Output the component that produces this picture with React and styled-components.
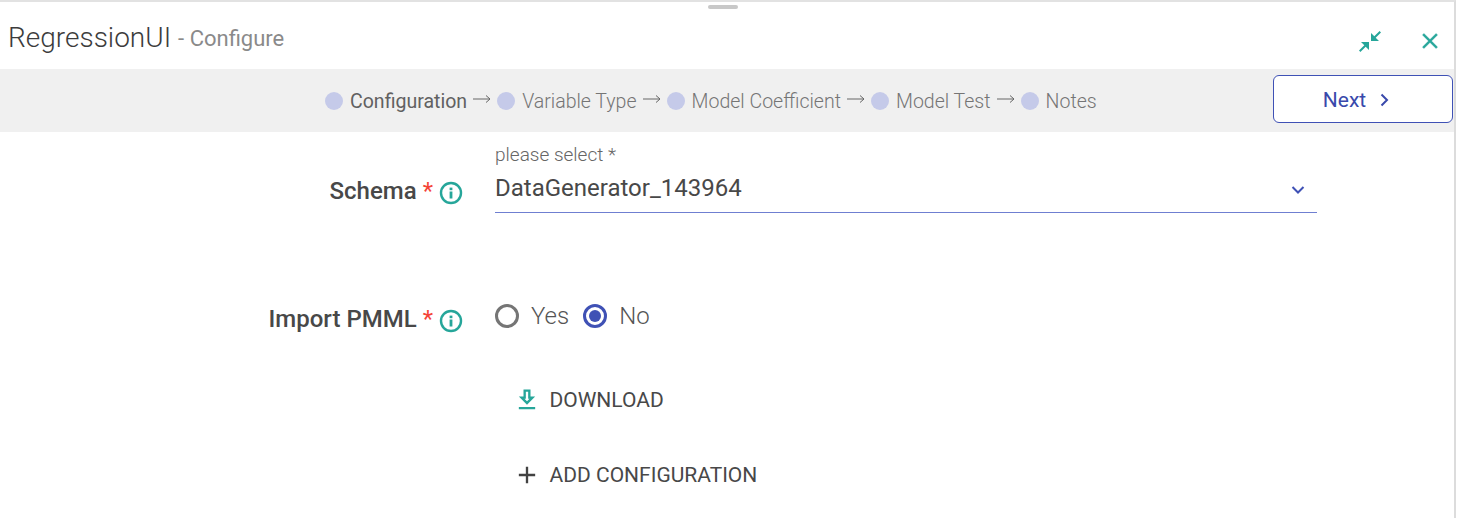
import React from "react";
import styled, { createGlobalStyle } from "styled-components";

const Global = createGlobalStyle`
  html, body { margin: 0; padding: 0; background: #fff; }
  body { font-family: Roboto, "Liberation Sans", sans-serif; overflow: hidden; }
`;
const Panel = styled.div`
  position: relative; width: 1454px; height: 518px; background: #fff;
  border-top: 2px solid #e2e2e2; border-right: 2px solid #dcdcdc;
`;
const Handle = styled.div`
  position: absolute; left: 708px; top: 3px; width: 30px; height: 4px;
  border-radius: 2px; background: #c8c8c8;
`;
const Header = styled.header`
  height: 67px; display: flex; align-items: center; justify-content: space-between;
  padding: 0 11px 0 8px; box-sizing: border-box;
`;
const Title = styled.div`
  display: flex; align-items: baseline; gap: 7px; font-size: 28px; font-weight: 300; color: #3c3c3c;
  margin-top: 3px;
`;
const Sub = styled.span` font-size: 22px; font-weight: 400; color: #8a8a8a; position: relative; top: -1px; `;
const HeaderIcons = styled.div` display: flex; align-items: center; gap: 35px; margin-top: 10px; `;
const Stepper = styled.div`
  position: relative; height: 63px; background: #f0f0f0; display: flex; align-items: center;
  padding-left: 325px; padding-top: 1px; box-sizing: border-box;
`;
const Dot = styled.span`
  width: 18px; height: 18px; border-radius: 50%; background: #c5cae9; flex: none;
`;
const StepLabel = styled.span`
  margin-left: 7px; font-size: 19.55px; color: ${p => p.$active ? "#616161" : "#757575"};
  font-weight: ${p => p.$active ? 400 : 300}; white-space: nowrap;
`;
const Arrow = styled.svg`
  width: 18px; height: 10px; margin: -4px 6px 0 6px; flex: none;
`;
const NextButton = styled.button`
  position: absolute; right: 1px; top: 6px; width: 180px; height: 48px; box-sizing: border-box;
  border: 1px solid #3f51b5; border-radius: 6px; background: #fff; color: #3949ab;
  font: 400 21px Roboto, sans-serif; display: flex; align-items: center; justify-content: center; gap: 11px;
  padding: 2px 12px 0 0;
`;
const Form = styled.main`
  display: flex; flex-direction: column; padding-top: 11px;
`;
const Row = styled.div`
  display: grid; grid-template-columns: 495px 822px; align-items: start;
  height: ${p => p.$h}px;
`;
const LabelCell = styled.div`
  display: flex; justify-content: flex-end; align-items: center; padding-right: 32px;
  font-size: 24px; font-weight: 500; color: #484848; padding-top: ${p => p.$top || 0}px;
`;
const Star = styled.span` color: #f44336; margin-left: 6px; font-weight: 400; `;
const InfoIcon = styled.svg` width: 24px; height: 24px; margin-left: 6px; margin-top: 5px; flex: none; `;
const Field = styled.div`
  position: relative; height: 70px; box-sizing: border-box; border-bottom: 1px solid #6f7fd1;
`;
const FieldLabel = styled.div` font-size: 19px; font-weight: 300; color: #666; line-height: 24px; `;
const FieldValue = styled.div` font-size: 24px; color: #484848; line-height: 28px; margin-top: 7px; `;
const Chevron = styled.svg` position: absolute; right: 11px; top: 39px; width: 16px; height: 16px; `;
const Radios = styled.div` display: flex; align-items: center; gap: 14px; height: 30px; `;
const RadioItem = styled.label` display: flex; align-items: center; gap: 12px; font-size: 24px; font-weight: 300; color: #555; `;
const RadioMark = styled.span`
  width: 24px; height: 24px; box-sizing: border-box; border-radius: 50%; border: 3px solid ${p => p.$on ? "#3f51b5" : "#757575"};
  display: flex; align-items: center; justify-content: center;
  &::after { content: ""; width: 12px; height: 12px; border-radius: 50%; background: ${p => p.$on ? "#3f51b5" : "transparent"}; }
`;
const ActionButton = styled.button`
  display: flex; align-items: center; gap: 8.5px; background: none; border: 0; padding: 0 0 0 18px; height: 30px;
  font: 400 21px Roboto, sans-serif; color: #484848; white-space: nowrap;
`;
const ActionIcon = styled.svg` width: 28px; height: 28px; flex: none; fill: ${p => p.$color}; `;

const Info = () => (
  <InfoIcon viewBox="0 0 24 24" fill="none">
    <circle cx="12" cy="12" r="10" stroke="#26a69a" strokeWidth="2.4" />
    <rect x="10.6" y="10.5" width="2.8" height="7" fill="#26a69a" />
    <rect x="10.6" y="6.6" width="2.8" height="2.6" fill="#26a69a" />
  </InfoIcon>
);
const ArrowGlyph = () => (
  <Arrow viewBox="0 0 18 10" fill="none" stroke="#666" strokeWidth="1">
    <path d="M0 5h17M13 1.5L17 5l-4 3.5" />
  </Arrow>
);
const steps = ["Configuration", "Variable Type", "Model Coefficient", "Model Test", "Notes"];

export default function App() {
  return (
    <>
      <Global />
      <Panel>
        <Handle />
        <Header>
          <Title>RegressionUI <Sub>- Configure</Sub></Title>
          <HeaderIcons>
            <svg width="24" height="24" viewBox="0 0 24 24" fill="#26a69a">
              <path d="M23 3.4l-5.3 5.3L21 12h-8V4l3.3 3.3L21.6 2z" />
              <path d="M2.4 23l5.3-5.3L11 21v-8H3l3.3 3.3L1 21.6z" />
            </svg>
            <svg width="26" height="26" viewBox="0 0 24 24" fill="#26a69a" stroke="#26a69a" strokeWidth="0.3">
              <path d="M19 6.41L17.59 5 12 10.59 6.41 5 5 6.41 10.59 12 5 17.59 6.41 19 12 13.41 17.59 19 19 17.59 13.41 12z" />
            </svg>
          </HeaderIcons>
        </Header>
        <Stepper>
          {steps.map((s, i) => (
            <React.Fragment key={s}>
              <Dot />
              <StepLabel $active={i === 0}>{s}</StepLabel>
              {i < steps.length - 1 && <ArrowGlyph />}
            </React.Fragment>
          ))}
          <NextButton>
            Next
            <svg width="14" height="14" viewBox="0 0 14 14" fill="none" stroke="#3949ab" strokeWidth="2"><path d="M4.5 1.5L10 7l-5.5 5.5" /></svg>
          </NextButton>
        </Stepper>
        <Form>
          <Row $h={158}>
            <LabelCell $top={33}>Schema<Star>*</Star><Info /></LabelCell>
            <Field>
              <FieldLabel>please select *</FieldLabel>
              <FieldValue>DataGenerator_143964</FieldValue>
              <Chevron viewBox="0 0 16 16" fill="none" stroke="#3f51b5" strokeWidth="2"><path d="M2.5 5L8 10.5 13.5 5" /></Chevron>
            </Field>
          </Row>
          <Row $h={84}>
            <LabelCell $top={3}>Import PMML<Star>*</Star><Info /></LabelCell>
            <Radios>
              <RadioItem><RadioMark />Yes</RadioItem>
              <RadioItem><RadioMark $on />No</RadioItem>
            </Radios>
          </Row>
          <Row $h={75}>
            <span />
            <ActionButton>
              <ActionIcon $color="#26a69a" viewBox="0 0 24 24">
                <path d="M19 9h-4V3H9v6H5l7 7 7-7zm-8 2V5h2v6h1.17L12 13.17 9.83 11H11zm-6 7h14v2H5z" />
              </ActionIcon>
              DOWNLOAD
            </ActionButton>
          </Row>
          <Row $h={40}>
            <span />
            <ActionButton>
              <ActionIcon $color="#424242" viewBox="0 0 24 24">
                <path d="M19 13h-6v6h-2v-6H5v-2h6V5h2v6h6v2z" />
              </ActionIcon>
              ADD CONFIGURATION
            </ActionButton>
          </Row>
        </Form>
      </Panel>
    </>
  );
}
